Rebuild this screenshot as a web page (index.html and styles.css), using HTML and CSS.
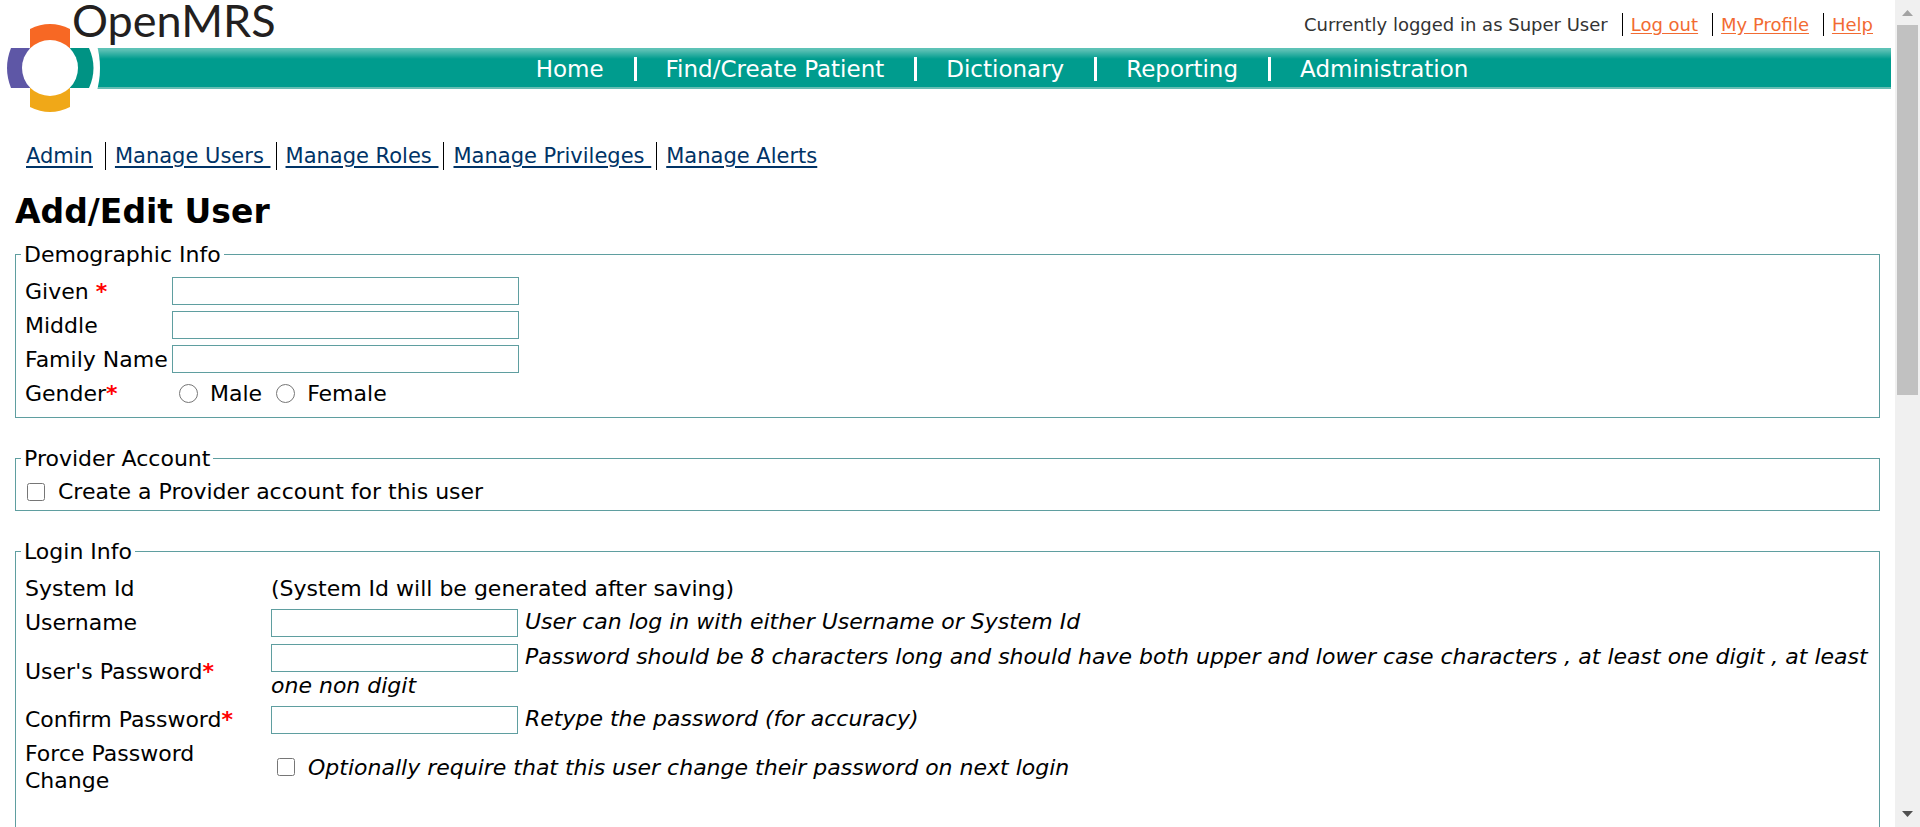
FILE: index.html
```
<!DOCTYPE html>
<html lang="en">
<head>
<meta charset="utf-8">
<title>OpenMRS - Add/Edit User</title>
<link rel="stylesheet" href="styles.css">
</head>
<body>
<div class="page">
  <header class="banner">
    <div class="brand">
      <svg class="brand-mark" viewBox="0 0 104 96" aria-hidden="true">
        <path fill="#fff" d="M0 20H96Q104 46 96 72H0Z"/>
        <path fill="#f76824" d="M30 7Q50 -3 70 7V46H30Z"/>
        <path fill="#f0a818" d="M30 48H70V85Q50 95 30 85Z"/>
        <path fill="#5e57a6" d="M11 26H50V66H11Q3 46 11 26Z"/>
        <path fill="#009384" d="M50 26H89Q98 46 89 66H50Z"/>
        <circle cx="50" cy="46" r="28" fill="#fff"/>
      </svg>
      <span class="brand-name">OpenMRS</span>
    </div>
    <div class="user-bar">
      <span class="user-item">Currently logged in as Super User</span>
      <span class="user-item"><a href="#">Log out</a></span>
      <span class="user-item"><a href="#">My Profile</a></span>
      <span class="user-item"><a href="#">Help</a></span>
    </div>
    <nav class="main-nav">
      <a href="#">Home</a>
      <a href="#">Find/Create Patient</a>
      <a href="#">Dictionary</a>
      <a href="#">Reporting</a>
      <a href="#">Administration</a>
    </nav>
  </header>

  <main class="content">
    <ul class="sub-nav">
      <li><a href="#">Admin</a></li>
      <li><a href="#">Manage Users </a></li>
      <li><a href="#">Manage Roles </a></li>
      <li><a href="#">Manage Privileges </a></li>
      <li><a href="#">Manage Alerts</a></li>
    </ul>
    <h1>Add/Edit User</h1>
    <form>
      <fieldset>
        <legend>Demographic Info</legend>
        <div class="rows demographic">
          <label for="given">Given <b class="req">*</b></label>
          <div><input class="text wide" id="given" type="text"></div>
          <label for="middle">Middle</label>
          <div><input class="text wide" id="middle" type="text"></div>
          <label for="family">Family Name</label>
          <div><input class="text wide" id="family" type="text"></div>
          <span>Gender<b class="req">*</b></span>
          <div class="choices">
            <input id="male" type="radio" name="gender"><label for="male">Male</label>
            <input id="female" type="radio" name="gender"><label for="female">Female</label>
          </div>
        </div>
      </fieldset>

      <fieldset>
        <legend>Provider Account</legend>
        <div class="choices provider">
          <input id="provider" type="checkbox"><label for="provider">Create a Provider account for this user</label>
        </div>
      </fieldset>

      <fieldset class="login">
        <legend>Login Info</legend>
        <div class="rows credentials">
          <span>System Id</span>
          <div>(System Id will be generated after saving)</div>
          <label for="username">Username</label>
          <div><input class="text" id="username" type="text"> <i>User can log in with either Username or System Id</i></div>
          <label for="password">User's Password<b class="req">*</b></label>
          <div><input class="text" id="password" type="password"> <i>Password should be 8 characters long and should have both upper and lower case characters , at least one digit , at least one non digit</i></div>
          <label for="confirm">Confirm Password<b class="req">*</b></label>
          <div><input class="text" id="confirm" type="password"> <i>Retype the password (for accuracy)</i></div>
          <span class="force">Force Password Change</span>
          <div class="choices">
            <input id="force" type="checkbox"><label for="force"><i>Optionally require that this user change their password on next login</i></label>
          </div>
        </div>
      </fieldset>
    </form>
  </main>
</div>
<div class="scrollbar" aria-hidden="true">
  <svg class="arrow" viewBox="0 0 25 25"><path fill="#a3a3a3" d="M7 16L12.500 10L18 16Z"/></svg>
  <div class="track"><div class="thumb"></div></div>
  <svg class="arrow" viewBox="0 0 25 25"><path fill="#505050" d="M7 9L12.500 15L18 9Z"/></svg>
</div>
</body>
</html>
```
FILE: styles.css
```
* { box-sizing: border-box; }
body {
  margin: 0;
  height: 100vh;
  overflow: hidden;
  display: grid;
  grid-template-columns: minmax(0, 1fr) 25px;
  background: #fff;
  color: #000;
  font: 22px/27px Verdana, "DejaVu Sans", sans-serif;
}
.page { height: 100vh; overflow: hidden; }

.banner {
  display: grid;
  grid-template-columns: 1fr auto;
  grid-template-rows: 48px 41px;
  padding-right: 4px;
}
.brand {
  grid-area: 1 / 1;
  position: relative;
  z-index: 1;
}
.brand-mark {
  position: absolute;
  top: 22px;
  left: 0;
  width: 104px;
  height: 96px;
}
.brand-name {
  position: absolute;
  top: 0;
  left: 72px;
  font: 45px/40px Lato, sans-serif;
  color: #231f20;
}
.user-bar {
  display: flex;
  align-items: flex-start;
  padding: 13px 18px 0 0;
  font-size: 18px;
  line-height: 23px;
  color: #333;
}
.user-item + .user-item {
  margin-left: 14px;
  padding-left: 8px;
  border-left: 1px solid #000;
}
.user-bar a { color: #f26b32; text-underline-offset: 2px; }
.main-nav {
  grid-column: 1 / -1;
  display: flex;
  align-items: center;
  justify-content: center;
  padding: 1px 0 0 113px;
  background: linear-gradient(#5cc4b8, #5cc0b4 2px, #009c8e 11px, #009c8e 39px, #66bdb3 39px);
  font-size: 23px;
}
.main-nav a {
  color: #fff;
  text-decoration: none;
  line-height: 24px;
}
.main-nav a + a {
  margin-left: 30px;
  padding-left: 29px;
  border-left: 3px solid #fff;
}

.content { padding: 53px 15px 0; }
.sub-nav {
  display: flex;
  margin: 0;
  padding: 0 0 0 11px;
  list-style: none;
  font-size: 21px;
  line-height: 28px;
}
.sub-nav li { white-space: pre; }
.sub-nav li + li {
  margin-left: 5px;
  padding-left: 9px;
  border-left: 1px solid #000;
}
.sub-nav li:nth-child(2) { margin-left: 12px; }
.sub-nav a {
  color: #036;
  text-decoration-thickness: 2px;
  text-underline-offset: 3px;
}
h1 {
  margin: 22px 0 9px;
  font-size: 33px;
  line-height: 40px;
}

fieldset {
  margin: 0 0 27px;
  padding: 0 9px 5px;
  border: 1px solid #5f9ea0;
}
legend {
  margin-left: -4px;
  padding: 0 3px;
}
.login { padding-bottom: 120px; }
.rows {
  display: grid;
  align-items: center;
}
.demographic {
  grid-template-columns: 147px 1fr;
  grid-auto-rows: 34px;
  padding: 6px 0 2px;
}
.credentials {
  grid-template-columns: 246px 1fr;
  row-gap: 6px;
  padding-top: 10px;
}
.text {
  width: 247px;
  height: 28px;
  margin: 0;
  padding: 2px;
  border: 1px solid #5f9ea0;
  background: #fff;
  font: inherit;
  vertical-align: middle;
}
.wide { width: 347px; display: block; }
.req { color: #f00; }
.force { max-width: 180px; }
.choices { display: flex; align-items: center; }
.choices input {
  width: 19px;
  height: 19px;
  margin: 0 12px 0 7px;
}
.choices label + input { margin-left: 14px; }
.choices input[type="checkbox"] { width: 18px; height: 18px; margin: 0 13px 0 6px; }
.provider { padding-top: 6px; }
.choices.provider input { margin-left: 2px; }

.scrollbar {
  display: flex;
  flex-direction: column;
  height: 100vh;
  background: #f0f0f0;
}
.arrow { width: 25px; height: 25px; }
.track { flex: 1; padding: 0 2px; }
.thumb { height: 370px; background: #c1c1c1; }
```
